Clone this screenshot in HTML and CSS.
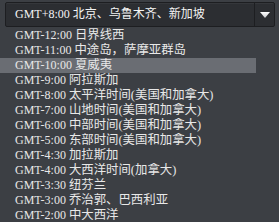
FILE: index.html
```html
<!DOCTYPE html>
<html lang="zh-CN">
<head>
    <meta charset="UTF-8">
    <title>时区选择</title>
    <link rel="stylesheet" href="styles.css">
</head>
<body>
    <div class="tz-select">
        <div class="tz-value"><span class="off">GMT+8:00</span> <span class="city">北京、乌鲁木齐、新加坡</span></div>
        <div class="tz-arrow">
            <svg width="10" height="6" viewBox="0 0 10 6">
                <defs>
                    <linearGradient id="arr" x1="0" y1="0" x2="0" y2="1">
                        <stop offset="0" stop-color="#ffffff"/>
                        <stop offset="1" stop-color="#c8cacd"/>
                    </linearGradient>
                </defs>
                <polygon points="0,0 10,0 5,6" fill="url(#arr)"/>
            </svg>
        </div>
    </div>

    <ul class="tz-list">
        <li><span class="off">GMT-12:00</span> <span class="city">日界线西</span></li>
        <li><span class="off">GMT-11:00</span> <span class="city">中途岛，萨摩亚群岛</span></li>
        <li class="selected"><span class="off">GMT-10:00</span> <span class="city">夏威夷</span></li>
        <li><span class="off">GMT-9:00</span> <span class="city">阿拉斯加</span></li>
        <li><span class="off">GMT-8:00</span> <span class="city">太平洋时间(美国和加拿大)</span></li>
        <li><span class="off">GMT-7:00</span> <span class="city">山地时间(美国和加拿大)</span></li>
        <li><span class="off">GMT-6:00</span> <span class="city">中部时间(美国和加拿大)</span></li>
        <li><span class="off">GMT-5:00</span> <span class="city">东部时间(美国和加拿大)</span></li>
        <li><span class="off">GMT-4:30</span> <span class="city">加拉斯加</span></li>
        <li><span class="off">GMT-4:00</span> <span class="city">大西洋时间(加拿大)</span></li>
        <li><span class="off">GMT-3:30</span> <span class="city">纽芬兰</span></li>
        <li><span class="off">GMT-3:00</span> <span class="city">乔治郭、巴西利亚</span></li>
        <li><span class="off">GMT-2:00</span> <span class="city">中大西洋</span></li>
    </ul>
</body>
</html>
```

FILE: styles.css
```css
body {
    margin: 0;
    padding: 0;
    background-color: #3c3f44;
    font-family: "Liberation Serif", "Noto Sans CJK SC", serif;
    font-size: 12px;
    overflow: hidden;
}
.tz-select {
    display: flex;
    margin: 2px 4px 0 5px;
    height: 25px;
    box-sizing: border-box;
    border: 1px solid #1d1e21;
    border-radius: 2px;
    background-color: #2c2e32;
    box-shadow: inset 0 1px 0 #35373b;
}
.tz-value {
    flex: 1;
    padding-left: 9px;
    line-height: 23px;
    color: #f4f4f4;
    white-space: nowrap;
}
.tz-arrow {
    width: 19px;
    display: flex;
    align-items: center;
    justify-content: center;
    border-left: 1px solid #1d1e21;
}
.tz-list {
    list-style: none;
    margin: 1px 0 0 0;
    padding: 0;
    width: 256px;
}
.tz-list li {
    height: 15px;
    line-height: 15px;
    padding-left: 15px;
    color: #e8e8e8;
    white-space: nowrap;
    overflow: hidden;
}
.tz-list .city {
    font-size: 12.4px;
}
.tz-list li.selected {
    background-color: #6a6d73;
}
```
